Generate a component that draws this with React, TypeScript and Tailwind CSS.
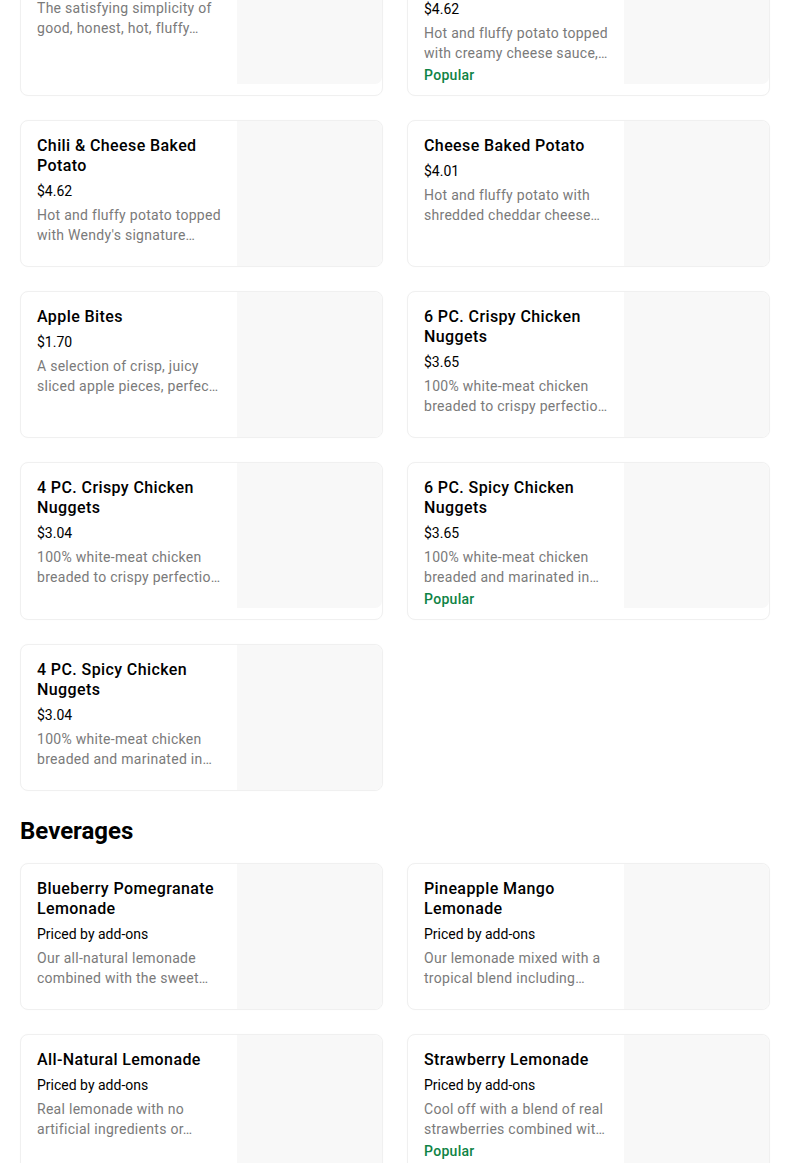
import React from "react";

type Item = { title: string; price?: string; desc: [string, string]; popular?: boolean };

const group1: Item[] = [
  { title: "Sour Cream & Chive Baked Potato", desc: ["The satisfying simplicity of", "good, honest, hot, fluffy…"] },
  { title: "Broccoli Cheese Baked Potato", price: "$4.62", desc: ["Hot and fluffy potato topped", "with creamy cheese sauce,…"], popular: true },
  { title: "Chili & Cheese Baked Potato", price: "$4.62", desc: ["Hot and fluffy potato topped", "with Wendy's signature…"] },
  { title: "Cheese Baked Potato", price: "$4.01", desc: ["Hot and fluffy potato with", "shredded cheddar cheese…"] },
  { title: "Apple Bites", price: "$1.70", desc: ["A selection of crisp, juicy", "sliced apple pieces, perfec…"] },
  { title: "6 PC. Crispy Chicken Nuggets", price: "$3.65", desc: ["100% white-meat chicken", "breaded to crispy perfectio…"] },
  { title: "4 PC. Crispy Chicken Nuggets", price: "$3.04", desc: ["100% white-meat chicken", "breaded to crispy perfectio…"] },
  { title: "6 PC. Spicy Chicken Nuggets", price: "$3.65", desc: ["100% white-meat chicken", "breaded and marinated in…"], popular: true },
  { title: "4 PC. Spicy Chicken Nuggets", price: "$3.04", desc: ["100% white-meat chicken", "breaded and marinated in…"] },
];

const beverages: Item[] = [
  { title: "Blueberry Pomegranate Lemonade", price: "Priced by add-ons", desc: ["Our all-natural lemonade", "combined with the sweet…"] },
  { title: "Pineapple Mango Lemonade", price: "Priced by add-ons", desc: ["Our lemonade mixed with a", "tropical blend including…"] },
  { title: "All-Natural Lemonade", price: "Priced by add-ons", desc: ["Real lemonade with no", "artificial ingredients or…"] },
  { title: "Strawberry Lemonade", price: "Priced by add-ons", desc: ["Cool off with a blend of real", "strawberries combined wit…"], popular: true },
];

function Card({ item }: { item: Item }) {
  return (
    <div className="flex rounded-[8px] border border-[#f0f0f0] bg-white shadow-[0_0_2px_rgba(0,0,0,0.02)] overflow-hidden">
      <div className="flex-1 min-w-0 pl-4 pr-4 pt-[15px] pb-[10px]">
        <div className="text-[16px] leading-[20px] font-medium text-black tracking-[0.4px]">{item.title}</div>
        {item.price && (
          <div className="mt-[5px] text-[14px] leading-[20px] text-black">{item.price}</div>
        )}
        <div className="mt-1 text-[14px] leading-[20px] text-[#7a7a7a] tracking-[0.28px] whitespace-nowrap">
          <div>{item.desc[0]}</div>
          <div>{item.desc[1]}</div>
        </div>
        {item.popular && (
          <div className="mt-[2px] text-[14px] leading-[20px] font-medium text-[#0e8345] tracking-[0.3px]">Popular</div>
        )}
      </div>
      <div className="w-[145px] h-[145px] shrink-0 bg-[#f8f8f8] rounded-r-[7px]" />
    </div>
  );
}

export default function App() {
  return (
    <div
      className="bg-white min-h-screen overflow-hidden"
      style={{ fontFamily: "Roboto, 'Noto Sans', sans-serif" }}
    >
      <div className="pl-5 w-[770px] -mt-[62px]">
        <div className="grid grid-cols-2 gap-6 items-stretch">
          {group1.map((it, i) => (
            <Card key={i} item={it} />
          ))}
        </div>
        <h2 className="mt-6 mb-4 text-[24px] leading-[32px] font-bold text-black">
          Beverages
        </h2>
        <div className="grid grid-cols-2 gap-6">
          {beverages.map((it, i) => (
            <Card key={i} item={it} />
          ))}
        </div>
      </div>
    </div>
  );
}
